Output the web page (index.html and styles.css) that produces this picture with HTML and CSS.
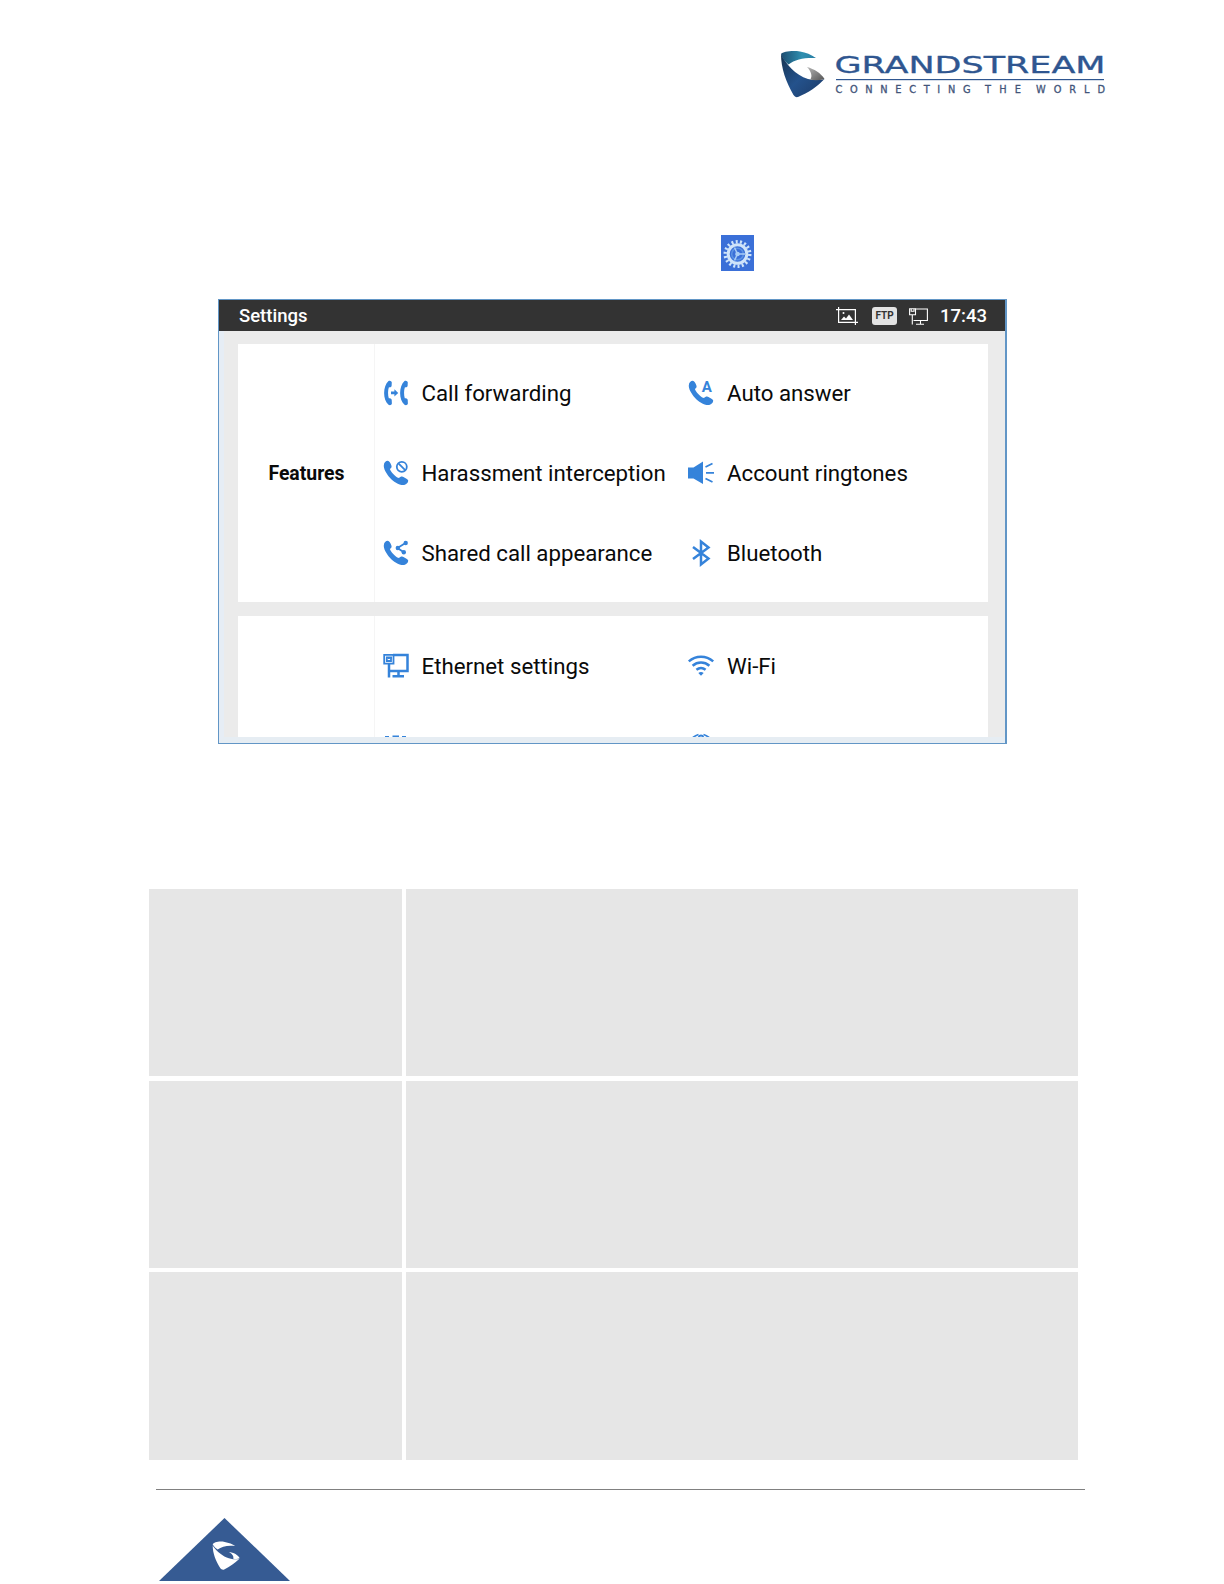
FILE: index.html
```html
<!DOCTYPE html>
<html lang="en">
<head>
    <meta charset="UTF-8">
    <meta name="viewport" content="width=device-width, initial-scale=1.0">
    <title>Settings</title>
    <link rel="stylesheet" href="styles.css">
</head>
<body>
    <svg class="symbols" width="0" height="0">
        <symbol id="handset" viewBox="0 0 26 26">
            <path d="M0.800 5.200C1 2.600 2.800 0.800 4.800 0.800C6.200 1 7.600 3.300 8.400 5.400C9 7.200 8.300 8 6.900 9C7.200 10.200 8.400 12.200 10.500 14.200C12.600 16.300 14.600 17.900 16.100 18.100C17.200 16.900 18.400 16.300 19.700 16.800C21.600 17.600 25 19.300 25.200 20.500C25.300 22.800 22.800 25 20.400 25C15.400 25 10.300 21.500 6.900 17.700C3.200 13.500 0.500 8.700 0.800 5.200Z"/>
        </symbol>
    </svg>

    <div class="page">
        <header class="page-header">
            <svg class="logo" width="336" height="50" viewBox="0 0 336 50">
                <defs>
                    <linearGradient id="teal" x1="0" y1="0" x2="1" y2="0">
                        <stop offset="0" stop-color="#1c4c70"/>
                        <stop offset="0.6" stop-color="#2f8fb0"/>
                        <stop offset="1" stop-color="#2a7fa5"/>
                    </linearGradient>
                    <linearGradient id="navy" x1="0" y1="0" x2="1" y2="1">
                        <stop offset="0" stop-color="#163350"/>
                        <stop offset="0.5" stop-color="#24528c"/>
                        <stop offset="1" stop-color="#1c3a66"/>
                    </linearGradient>
                    <linearGradient id="steel" x1="0" y1="0" x2="1" y2="1">
                        <stop offset="0" stop-color="#b5b5b5"/>
                        <stop offset="1" stop-color="#555"/>
                    </linearGradient>
                </defs>
                <path fill="url(#navy)" d="M1 4C6 14 15 25 28 29C34 30.500 40 30 44.500 29C38 36 28 43 18 47C16 47.500 14.500 46.500 13.500 45C6 32 1 18 1 4Z"/>
                <path fill="url(#teal)" d="M1 4C3 1.500 12 0.500 20 1.500C26 2.500 31 4.500 36 8C25 7.500 15 9 8.500 14.500C4.500 11 2 8 1 4Z"/>
                <path fill="url(#steel)" d="M27 17C34 19 41 23 44.500 29C39 30.500 34 30.500 30 29.500C33 27 31 21 27 17Z"/>
                <g fill="#2f5690">
                    <text class="logo-name" x="54.500" y="22.500" textLength="271" lengthAdjust="spacingAndGlyphs">GRANDSTREAM</text>
                    <rect x="56" y="29" width="268" height="1.200"/>
                </g>
                <g class="logo-tagline">
                    <text x="55.500" y="43" textLength="135">CONNECTING</text>
                    <text x="205" y="43" textLength="36">THE</text>
                    <text x="256" y="43" textLength="69">WORLD</text>
                </g>
            </svg>
        </header>

        <div class="app-line">
            <svg class="app-icon" width="33" height="36" viewBox="0 0 33 36">
                <rect width="33" height="36" fill="#3b70d8"/>
                <circle cx="16.500" cy="19" r="12.300" fill="none" stroke="#cfe4fa" stroke-width="3.400" stroke-dasharray="2 2.290"/>
                <circle cx="16.500" cy="19" r="9.300" fill="none" stroke="#cfe4fa" stroke-width="3"/>
                <circle cx="16.500" cy="19" r="5.800" fill="none" stroke="#5c93e4" stroke-width="1.500"/>
                <path d="M16.500 19L13.500 12.500M16.500 19L24 19M16.500 19L13.500 25.500" stroke="#a9cdf6" stroke-width="1.500"/>
                <circle cx="16.500" cy="19" r="2.300" fill="#a9cdf6"/>
            </svg>
        </div>

        <div class="screen">
            <div class="status-bar">
                <span class="status-title">Settings</span>
                <div class="status-icons">
                    <svg width="22" height="18" viewBox="0 0 22 18" fill="none" stroke="#fff" stroke-width="1.200">
                        <path d="M0 2.600H19.400V18M2.600 0V15.400H22"/>
                        <path d="M5 13L8 9.500L10 11.500L13 7.500L17 13Z" fill="#fff" stroke="none"/>
                        <circle cx="7.500" cy="6" r="1" fill="#fff" stroke="none"/>
                    </svg>
                    <span class="ftp">FTP</span>
                    <svg width="19" height="17" viewBox="0 0 19 17" fill="none" stroke="#fff" stroke-width="1.100">
                        <path d="M6.500 1H18.400V12.500H4.500M11.500 12.500V16M7 16.200H15M3.300 7V16.500"/>
                        <path d="M0.600 0.800H6.500V6.700H0.600ZM2.200 1V3.200H5V1"/>
                    </svg>
                    <span class="clock">17:43</span>
                </div>
            </div>

            <div class="screen-body">
                <div class="card">
                    <div class="card-title">Features</div>
                    <div class="card-items">
                        <div class="item">
                            <svg class="icon" viewBox="0 0 26 26">
                                <path d="M5.500 1C7 0.200 8.500 1 8.800 2.500L8.600 6C8.300 7.400 7 7.300 5.800 7.400C4.800 10.500 4.800 15 5.800 18.200C7 18.300 8.400 18.400 8.700 19.700L8.900 23.500C8.600 25 7 25.800 5.500 24.800C-0.300 20 -0.300 6 5.500 1Z"/>
                                <path d="M21.500 1C23 0.200 24.500 1 24.800 2.500L24.600 6C24.300 7.400 23 7.300 21.800 7.400C20.800 10.500 20.800 15 21.800 18.200C23 18.300 24.400 18.400 24.700 19.700L24.900 23.500C24.600 25 23 25.800 21.500 24.800C15.700 20 15.700 6 21.500 1Z"/>
                                <path d="M8 11.600H11.400V9.200L15.200 12.900L11.400 16.600V14.200H8Z"/>
                            </svg>
                            <span>Call forwarding</span>
                        </div>
                        <div class="item">
                            <svg class="icon" viewBox="0 0 26 26">
                                <use href="#handset"/>
                                <text class="icon-letter" x="13.800" y="12">A</text>
                            </svg>
                            <span>Auto answer</span>
                        </div>
                        <div class="item">
                            <svg class="icon" viewBox="0 0 26 26">
                                <use href="#handset"/>
                                <g class="line">
                                    <circle cx="18.800" cy="6.800" r="5"/>
                                    <path d="M15.400 3.400L22.200 10.200"/>
                                </g>
                            </svg>
                            <span>Harassment interception</span>
                        </div>
                        <div class="item">
                            <svg class="icon" viewBox="0 0 26 26">
                                <path d="M0 7.500H5.500L15 1.500V24L5.500 18.500H0Z"/>
                                <path class="line" d="M17.500 7L24.500 3.500M18 12.800H26M17.500 18.500L24.500 22"/>
                            </svg>
                            <span>Account ringtones</span>
                        </div>
                        <div class="item">
                            <svg class="icon" viewBox="0 0 26 26">
                                <use href="#handset"/>
                                <path class="line" d="M22.500 3L14.500 8L20.800 12.200"/>
                                <circle cx="22.700" cy="3" r="2.200"/>
                                <circle cx="14.800" cy="8" r="2.200"/>
                                <circle cx="20.800" cy="12.200" r="2.200"/>
                            </svg>
                            <span>Shared call appearance</span>
                        </div>
                        <div class="item">
                            <svg class="icon" viewBox="0 0 26 26">
                                <path class="line bold" d="M5 7L20.500 18.500L13 24.500V1.500L20.500 7.500L5 19"/>
                            </svg>
                            <span>Bluetooth</span>
                        </div>
                    </div>
                </div>

                <div class="card card-cut">
                    <div class="card-title"></div>
                    <div class="card-items">
                        <div class="item">
                            <svg class="icon" viewBox="0 0 26 26">
                                <path class="line bold" d="M10 2H24.500V18H6.500M15.500 18V22.500M9.500 23.200H21M6 11V24.500"/>
                                <path class="line" d="M1.200 1.800H10.500V10.700H1.200ZM3.800 4.800V8H8V4.800M3 4.500H9M5.900 4V6"/>
                            </svg>
                            <span>Ethernet settings</span>
                        </div>
                        <div class="item">
                            <svg class="icon" viewBox="0 0 26 26">
                                <path class="line bold" d="M0.800 8.400C8 2.200 18 2.200 25.200 8.400M4.600 12.700C9.500 8.500 16.500 8.500 21.400 12.700M8.400 16.800C11.300 14.500 14.700 14.500 17.600 16.800"/>
                                <path d="M10.300 20C12 18.700 14 18.700 15.700 20L13 22.800Z"/>
                            </svg>
                            <span>Wi-Fi</span>
                        </div>
                        <div class="item item-next">
                            <svg class="icon" viewBox="0 0 26 26">
                                <path d="M2 2H6V4H2ZM9.500 1.500H16V4H9.500ZM19 2H23V4H19Z"/>
                            </svg>
                        </div>
                        <div class="item item-next">
                            <svg class="icon" viewBox="0 0 26 26">
                                <path class="line" d="M5 3.500C7 1.800 8.500 1 10.500 0.500M21 3.500C19 1.800 17.500 1 15.500 0.500M10.500 3.500C11.500 0.800 14.500 0.800 15.500 3.500"/>
                            </svg>
                        </div>
                    </div>
                </div>
            </div>
        </div>

        <div class="spec-table">
            <div></div><div></div>
            <div></div><div></div>
            <div></div><div></div>
        </div>

        <footer class="page-footer">
            <svg width="131" height="63" viewBox="0 0 131 63">
                <path fill="#365b93" d="M65.500 0L131 63H0Z"/>
                <g fill="#fff" transform="translate(0.700 0)">
                    <path d="M53 27.500C55 31 61 37 67 39.500C71 41.300 75 41.600 79.500 41C75 45 70 49 64.500 51.500C63 52 61.500 51.500 60.500 50C56 43 53 35 53 27.500Z"/>
                    <path d="M53 26.500C54 24 60 23 65 24C69 24.800 73 26 75.500 28C69 27 62 28 58 31.500C56 30.500 54.500 28.500 53 26.500Z"/>
                    <path d="M69 34C74 34.500 78.500 37 80 40.300C78 41.300 76 41.200 73.500 40.700C74.500 38 72 35.500 69 34Z"/>
                </g>
            </svg>
        </footer>
    </div>
</body>
</html>
```

FILE: styles.css
```css
* {
    box-sizing: border-box;
}
body {
    margin: 0;
    background-color: #fff;
    font-family: Roboto, sans-serif;
    color: #0a0a0a;
}
svg {
    display: block;
    flex: none;
}
.symbols {
    height: 0;
}
.page {
    width: 1224px;
    height: 1584px;
    overflow: hidden;
}
.page-header {
    height: 235px;
    padding: 50px 0 0 780px;
}
.logo-name {
    font-family: "DejaVu Sans", sans-serif;
    font-size: 23px;
    stroke: #2f5690;
    stroke-width: 0.3;
}
.logo-tagline {
    font-family: "DejaVu Sans", sans-serif;
    font-size: 9.8px;
    fill: #43557a;
    stroke: #43557a;
    stroke-width: 0.3;
}
.app-line {
    height: 64px;
    padding-left: 721px;
}

/* phone screen */
.screen {
    display: flex;
    flex-direction: column;
    width: 789px;
    height: 445px;
    margin-left: 218px;
    border: 1px solid #6296c6;
    border-right-width: 2px;
    background-color: #ebebeb;
}
.status-bar {
    display: flex;
    justify-content: space-between;
    align-items: center;
    height: 31px;
    padding: 1px 18px 0 20px;
    background-color: #333;
    color: #fff;
    font-size: 18.5px;
    font-weight: 500;
}
.status-icons {
    display: flex;
    align-items: center;
}
.ftp {
    width: 25px;
    height: 18px;
    margin: 0 12px 0 14px;
    border-radius: 3px;
    background-color: #e3e3e3;
    color: #333;
    font-size: 10px;
    font-weight: 700;
    line-height: 18px;
    text-align: center;
}
.clock {
    margin-left: 12px;
}
.screen-body {
    flex: 1;
    display: flex;
    flex-direction: column;
    gap: 14px;
    min-height: 0;
    padding: 13px 17px 0 14px;
    border-left: 5px solid #e6edf5;
    border-bottom: 6px solid #e6edf3;
}
.card {
    display: flex;
    flex: none;
    height: 258px;
    background-color: #fff;
}
.card-cut {
    height: 121px;
    overflow: hidden;
}
.card-title {
    display: flex;
    align-items: center;
    justify-content: center;
    width: 138px;
    padding-left: 1px;
    border-right: 1px solid #f5f5f5;
    font-size: 19.4px;
    font-weight: 700;
}
.card-items {
    display: grid;
    grid-template-columns: 305.5px 300px;
    grid-auto-rows: 80px;
    padding: 9px 0 0 7.5px;
}
.card-cut .card-items {
    padding-top: 10px;
}
.item {
    display: flex;
    align-items: center;
    gap: 13px;
    font-size: 22.25px;
    white-space: nowrap;
}
.item-next {
    align-items: flex-start;
    padding-top: 28px;
}
.icon {
    width: 26px;
    height: 26px;
    overflow: visible;
    fill: #3583da;
}
.icon .line {
    fill: none;
    stroke: #3583da;
    stroke-width: 1.8;
}
.icon .bold {
    stroke-width: 2.5;
}
.icon-letter {
    font-size: 15px;
    font-weight: 700;
}

/* grey table */
.spec-table {
    display: grid;
    grid-template-columns: 253px 672px;
    grid-template-rows: 188px 187px 188px;
    gap: 4px;
    margin: 145px 0 0 149px;
}
.spec-table div {
    background-color: #e6e6e6;
}
.spec-table div:nth-child(-n+2) {
    margin-bottom: 1px;
}
.page-footer {
    width: 929px;
    margin: 29px 0 0 156px;
    padding: 28px 0 0 3px;
    border-top: 1px solid #808080;
}
```
